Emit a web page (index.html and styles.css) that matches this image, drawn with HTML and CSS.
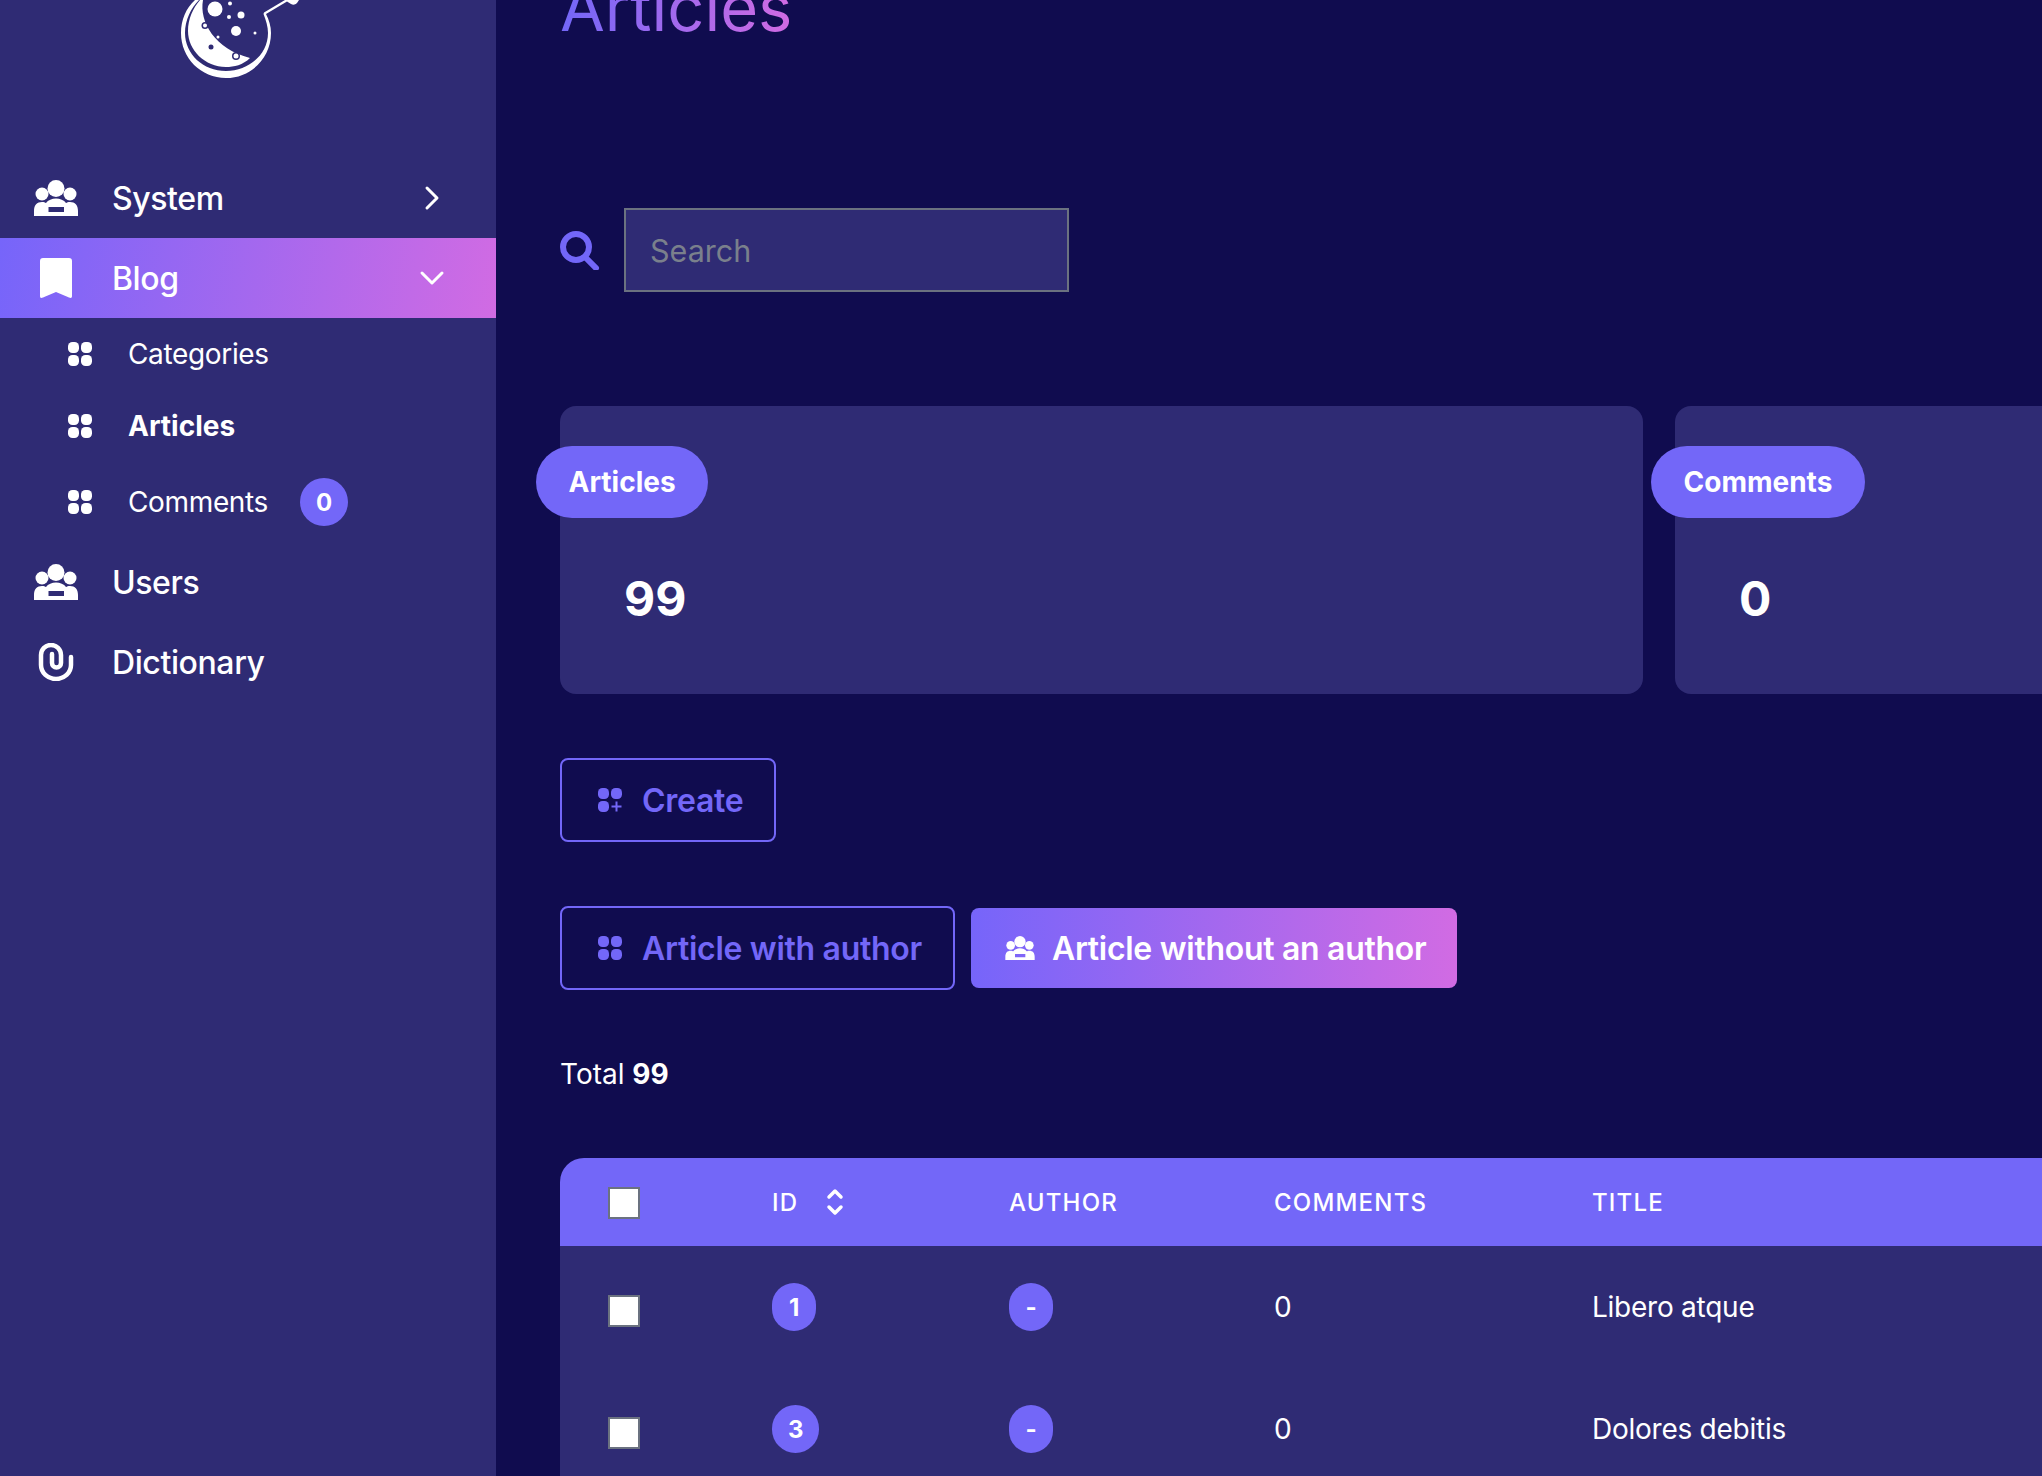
FILE: index.html
```html
<!DOCTYPE html>
<html lang="en">
<head>
    <meta charset="UTF-8">
    <title>Articles</title>
    <link rel="stylesheet" href="styles.css">
</head>
<body>
    <svg class="icon-defs" aria-hidden="true">
        <symbol id="i-users" viewBox="0 0 44 36">
            <circle cx="22" cy="8.500" r="8.500"/>
            <circle cx="8" cy="14" r="6.500"/>
            <circle cx="36" cy="14" r="6.500"/>
            <path fill-rule="evenodd" d="M0 36V31C0 25 3 22 8 22C10 22 11 22.500 12 23C14 20 18 18.500 22 18.500C26 18.500 30 20 32 23C33 22.500 34 22 36 22C41 22 44 25 44 31V36ZM14.500 27V32H30V27Z"/>
        </symbol>
        <symbol id="i-squares" viewBox="0 0 24 24">
            <rect x="0" y="0" width="11" height="11" rx="4.500"/>
            <rect x="13" y="0" width="11" height="11" rx="4.500"/>
            <rect x="0" y="13" width="11" height="11" rx="4.500"/>
            <rect x="13" y="13" width="11" height="11" rx="4.500"/>
        </symbol>
    </svg>

    <div class="layout">
        <aside class="sidebar">
            <div class="logo">
                <svg class="logo-mark" viewBox="170 0 140 90" fill="#fff">
                    <path fill-rule="evenodd" d="M195 0C186 8 181 20 181 33C181 58 201 78 226 78C251 78 271 58 271 33C271 26 269 20 266 14L287 1.500L291 4C293 5 295 5 297 3L299 0H285L264 12.500L263.500 14C266 20 268 27 268 33C268 55 248 71 226 71C203 71 185 54 185 33C185 20 191 8 199 0Z"/>
                    <path d="M203 0C199 22 215 49 250 58C243 65 234 67 226 67C205 67 188 50 188 31C188 19 193 8 200 0Z"/>
                    <circle cx="215" cy="9" r="7.500"/>
                    <circle cx="230" cy="3.500" r="2"/>
                    <circle cx="229" cy="17" r="2"/>
                    <circle cx="241" cy="15" r="3.500"/>
                    <circle cx="236" cy="31" r="5"/>
                    <circle cx="255" cy="33" r="1.500"/>
                    <circle cx="218" cy="37" r="1.500"/>
                    <circle cx="205" cy="25.500" r="3.500" fill="#2f2b74"/>
                    <circle cx="205" cy="25.500" r="2"/>
                    <circle cx="211" cy="47" r="2.500" fill="#2f2b74"/>
                    <circle cx="236" cy="56" r="4" fill="#2f2b74"/>
                    <circle cx="236" cy="56" r="2.500"/>
                </svg>
            </div>

            <nav class="menu">
                <a class="menu-item">
                    <span class="menu-icon"><svg class="icon-users"><use href="#i-users"/></svg></span>
                    <span>System</span>
                    <svg class="chevron" viewBox="0 0 32 32"><path d="M11 6l10 10-10 10"/></svg>
                </a>
                <a class="menu-item active">
                    <span class="menu-icon">
                        <svg class="icon-bookmark" viewBox="0 0 32 40"><path d="M3 0H29C31 0 32 1 32 3V38C32 40 31 40.500 29 39.500L16 34L3 39.500C1 40.500 0 40 0 38V3C0 1 1 0 3 0Z"/></svg>
                    </span>
                    <span>Blog</span>
                    <svg class="chevron" viewBox="0 0 32 32"><path d="M6 11l10 10 10-10"/></svg>
                </a>
                <div class="submenu">
                    <a class="submenu-item"><svg class="icon-squares"><use href="#i-squares"/></svg><span>Categories</span></a>
                    <a class="submenu-item current"><svg class="icon-squares"><use href="#i-squares"/></svg><span>Articles</span></a>
                    <a class="submenu-item tall"><svg class="icon-squares"><use href="#i-squares"/></svg><span>Comments</span><span class="menu-badge">0</span></a>
                </div>
                <a class="menu-item">
                    <span class="menu-icon"><svg class="icon-users"><use href="#i-users"/></svg></span>
                    <span>Users</span>
                </a>
                <a class="menu-item">
                    <span class="menu-icon">
                        <svg class="icon-clip" viewBox="0 0 36 38"><path d="M33 14V22A15 14 0 0 1 3 22V12A10 10 0 0 1 23 12V20A4.500 4.500 0 0 1 14 20V11"/></svg>
                    </span>
                    <span>Dictionary</span>
                </a>
            </nav>
        </aside>

        <main class="content">
            <h1 class="page-title"><span>Articles</span></h1>

            <form class="search">
                <svg class="search-icon" viewBox="0 0 40 40"><circle cx="16" cy="17" r="13"/><path d="M26 28l10 10"/></svg>
                <input class="search-input" type="text" placeholder="Search">
            </form>

            <section class="metrics">
                <div class="metric">
                    <div class="metric-label">Articles</div>
                    <div class="metric-value">99</div>
                </div>
                <div class="metric">
                    <div class="metric-label">Comments</div>
                    <div class="metric-value">0</div>
                </div>
            </section>

            <div class="actions">
                <a class="btn btn-outline"><svg class="icon-squares" viewBox="0 0 24 24"><rect width="11" height="11" rx="4.500"/><rect x="13" width="11" height="11" rx="4.500"/><rect y="13" width="11" height="11" rx="4.500"/><path d="M18.500 13.500v10M13.500 18.500h10" class="plus"/></svg><span>Create</span></a>
            </div>

            <div class="actions tabs">
                <a class="btn btn-outline"><svg class="icon-squares"><use href="#i-squares"/></svg><span>Article with author</span></a>
                <a class="btn btn-gradient"><svg class="icon-users-small"><use href="#i-users"/></svg><span>Article without an author</span></a>
            </div>

            <p class="total">Total <strong>99</strong></p>

            <table class="table">
                <colgroup>
                    <col class="col-check"><col class="col-id"><col class="col-author"><col class="col-comments"><col class="col-title">
                </colgroup>
                <thead>
                    <tr>
                        <th><input class="check" type="checkbox"></th>
                        <th><span class="sort">ID<svg class="sort-icon" viewBox="0 0 18 28"><path d="M3 9l6-6 6 6M3 19l6 6 6-6"/></svg></span></th>
                        <th>Author</th>
                        <th>Comments</th>
                        <th>Title</th>
                    </tr>
                </thead>
                <tbody>
                    <tr>
                        <td><input class="check" type="checkbox"></td>
                        <td><span class="pill">1</span></td>
                        <td><span class="pill">-</span></td>
                        <td>0</td>
                        <td>Libero atque</td>
                    </tr>
                    <tr>
                        <td><input class="check" type="checkbox"></td>
                        <td><span class="pill">3</span></td>
                        <td><span class="pill">-</span></td>
                        <td>0</td>
                        <td>Dolores debitis</td>
                    </tr>
                </tbody>
            </table>
        </main>
    </div>
</body>
</html>
```

FILE: styles.css
```css
* {
    box-sizing: border-box;
}
html, body {
    height: 100%;
}
body {
    margin: 0;
    overflow: hidden;
    background: #100c4f;
    color: #fff;
    font-family: Inter, 'Liberation Sans', sans-serif;
    font-size: 28px;
}
.icon-defs {
    display: none;
}
.layout {
    display: flex;
    height: 100vh;
}

/* sidebar */
.sidebar {
    flex: 0 0 496px;
    background: #2f2b74;
}
.logo {
    height: 158px;
    padding-left: 170px;
}
.logo-mark {
    width: 140px;
    height: 90px;
    display: block;
}
.menu-item {
    height: 80px;
    display: flex;
    align-items: center;
    gap: 34px;
    padding: 0 48px 0 34px;
    font-size: 32px;
    font-weight: 500;
    letter-spacing: -0.4px;
    color: #fff;
}
.menu-item.active {
    background: linear-gradient(100deg, #7665fa 0%, #d16be3 100%);
}
.menu-icon {
    flex: 0 0 44px;
    height: 44px;
    display: flex;
    align-items: center;
    justify-content: center;
    fill: #fff;
}
.icon-users {
    width: 44px;
    height: 36px;
    fill: #fff;
}
.icon-bookmark {
    width: 32px;
    height: 40px;
    fill: #fff;
}
.icon-clip {
    width: 36px;
    height: 38px;
    fill: none;
    stroke: #fff;
    stroke-width: 4.500;
    stroke-linecap: round;
}
.chevron {
    width: 32px;
    height: 32px;
    margin-left: auto;
    fill: none;
    stroke: #fff;
    stroke-width: 3;
    stroke-linecap: round;
    stroke-linejoin: round;
}
.submenu-item {
    height: 72px;
    display: flex;
    align-items: center;
    padding-left: 68px;
    gap: 36px;
    font-size: 28px;
    letter-spacing: -0.35px;
}
.submenu-item.tall {
    height: 80px;
}
.submenu-item.current {
    font-weight: 700;
    letter-spacing: 0;
}
.icon-squares {
    width: 24px;
    height: 24px;
    flex: none;
    fill: currentColor;
}
.menu-badge {
    width: 48px;
    height: 48px;
    margin-left: -4px;
    border-radius: 50%;
    background: #7367f8;
    display: flex;
    align-items: center;
    justify-content: center;
    font-size: 24px;
    font-weight: 700;
}

/* main */
.content {
    flex: 1;
    min-width: 0;
    overflow: hidden;
    padding-left: 64px;
}
.page-title {
    margin: -28px 0 0;
    font-size: 65px;
    line-height: 72px;
    font-weight: 400;
}
.page-title span {
    background: linear-gradient(90deg, #7367f8 0%, #d16be3 100%);
    -webkit-background-clip: text;
    background-clip: text;
    color: transparent;
}
.search {
    margin: 164px 0 0;
    display: flex;
    align-items: center;
    gap: 24px;
}
.search-icon {
    width: 40px;
    height: 40px;
    fill: none;
    stroke: #7367f8;
    stroke-width: 6;
    stroke-linecap: round;
}
.search-input {
    width: 445px;
    height: 84px;
    padding: 0 24px;
    background: #2f2b74;
    border: 2px solid #6b7280;
    border-radius: 0;
    color: #fff;
    font-family: inherit;
    font-size: 30.500px;
    outline: none;
}
.search-input::placeholder {
    color: #7a808c;
    opacity: 1;
}
.metrics {
    margin-top: 114px;
    display: flex;
    gap: 32px;
}
.metric {
    flex: 0 0 1083px;
    height: 288px;
    padding-top: 40px;
    background: #2f2b74;
    border-radius: 16px;
}
.metric-label {
    display: inline-flex;
    align-items: center;
    height: 72px;
    margin-left: -24px;
    padding: 0 32.500px;
    background: #7367f8;
    border-radius: 36px;
    font-size: 28px;
    font-weight: 700;
}
.metric-value {
    margin: 51px 0 0 64px;
    font-size: 48px;
    line-height: 60px;
    font-weight: 700;
}
.actions {
    margin-top: 64px;
    display: flex;
    align-items: center;
    gap: 16px;
}
.btn {
    display: inline-flex;
    align-items: center;
    gap: 20px;
    height: 84px;
    padding: 0 31px 0 36px;
    border-radius: 8px;
    font-size: 32px;
    font-weight: 600;
    letter-spacing: -0.3px;
}
.btn-outline {
    border: 2px solid #7367f8;
    color: #7367f8;
}
.btn-gradient {
    height: 80px;
    padding: 0 31px 0 34px;
    gap: 17px;
    background: linear-gradient(90deg, #7665fa 0%, #d16be3 100%);
    color: #fff;
}
.plus {
    fill: none;
    stroke: currentColor;
    stroke-width: 2;
}
.icon-users-small {
    width: 30px;
    height: 24px;
    fill: #fff;
}
.total {
    margin: 64px 0 0;
    line-height: 40px;
}
.table {
    margin-top: 64px;
    width: 1800px;
    table-layout: fixed;
    border-collapse: separate;
    border-spacing: 0;
    letter-spacing: -0.25px;
}
.col-check { width: 164px; }
.col-id { width: 237px; }
.col-author { width: 265px; }
.col-comments { width: 318px; }
.table th {
    height: 88px;
    padding: 0 0 0 48px;
    background: #7367f8;
    text-align: left;
    font-size: 24px;
    font-weight: 500;
    letter-spacing: 1.200px;
    text-transform: uppercase;
}
.table th:first-child {
    border-top-left-radius: 24px;
}
.table td {
    height: 122px;
    padding: 0 0 0 48px;
    background: #2f2b74;
}
.sort {
    display: inline-flex;
    align-items: center;
    gap: 28px;
}
.sort-icon {
    width: 18px;
    height: 28px;
    fill: none;
    stroke: #fff;
    stroke-width: 3.500;
    stroke-linecap: round;
    stroke-linejoin: round;
}
.check {
    appearance: none;
    display: block;
    width: 32px;
    height: 32px;
    margin: 8px 0 0;
    background: #fff;
    border: 2px solid #6b7280;
    border-radius: 0;
}
.table th .check {
    margin-top: 2px;
}
.pill {
    display: inline-flex;
    align-items: center;
    justify-content: center;
    min-width: 44px;
    height: 48px;
    padding: 0 16px;
    background: #7367f8;
    border-radius: 24px;
    font-size: 24px;
    font-weight: 700;
}
```
